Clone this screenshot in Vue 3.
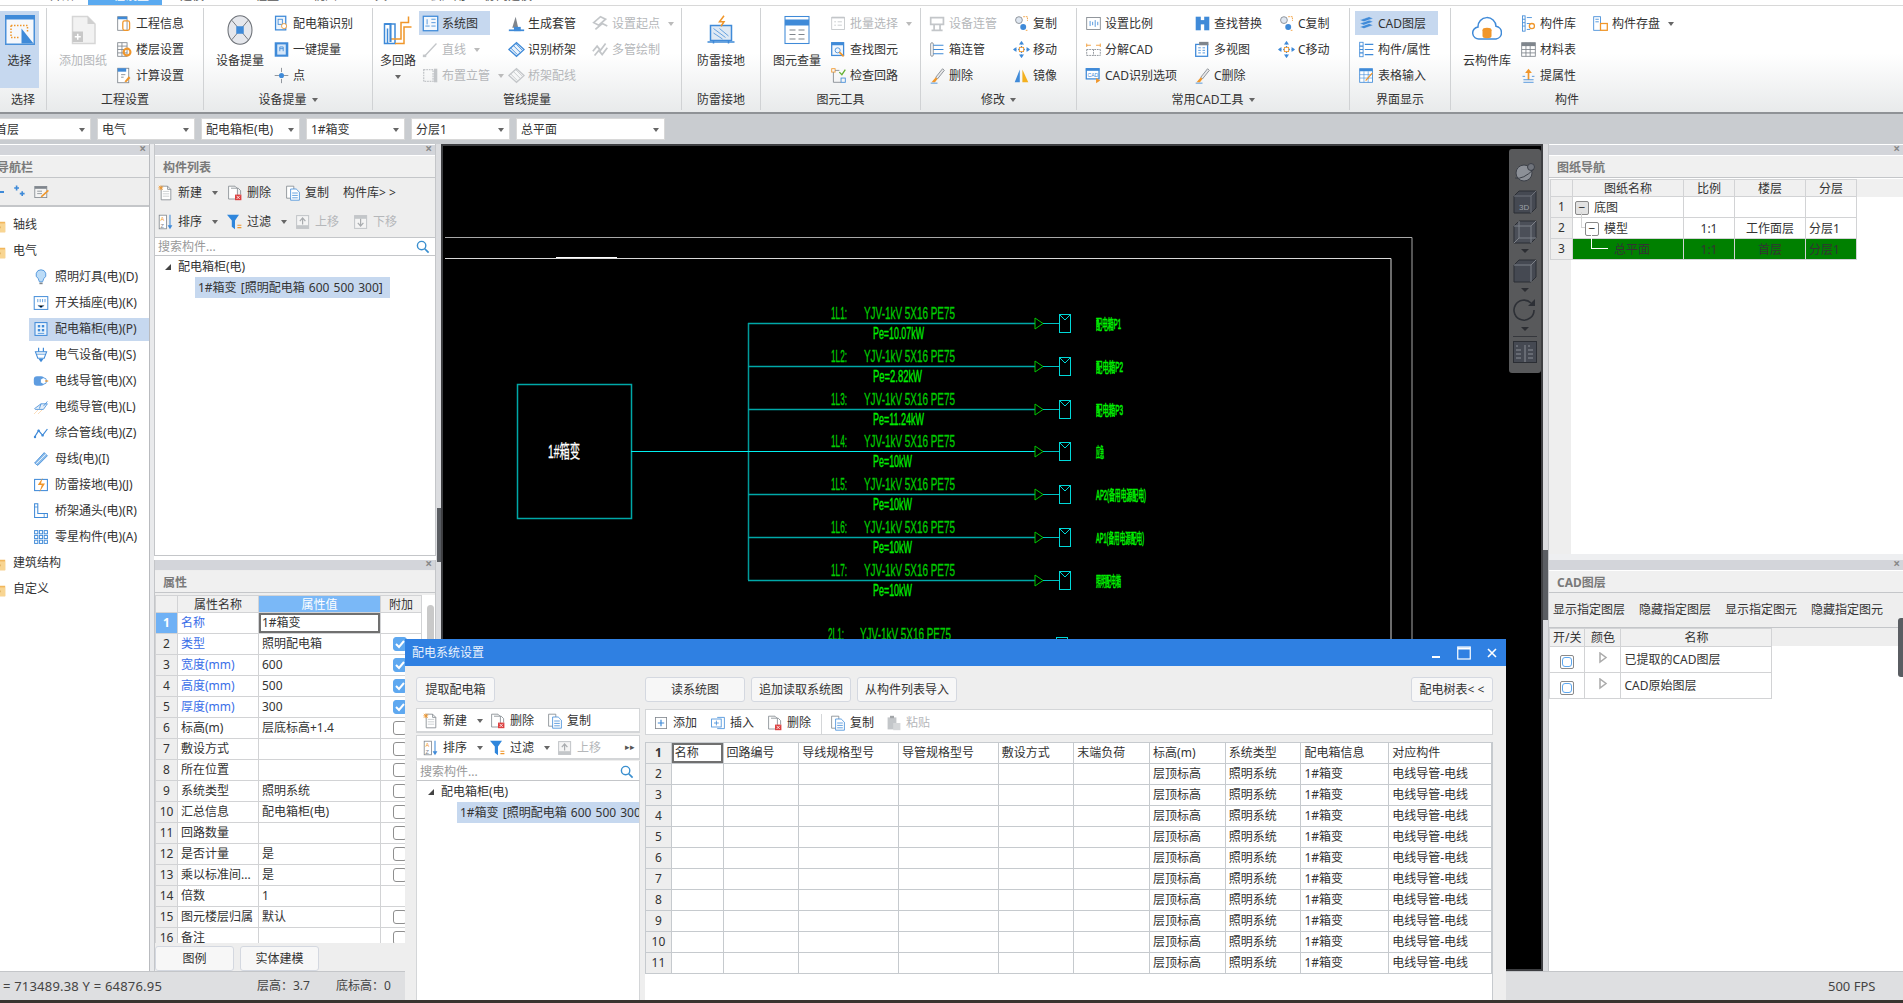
<template>
  <div class="app">
    <!-- 顶部页签，只露出一点 -->
    <div class="tabs">
      <span v-for="t in tabs" :key="t.t" class="tab" :class="{ on: t.on }" :style="{ width: t.w + 'px', paddingLeft: (t.pl || 0) + 'px', paddingRight: (t.pr || 0) + 'px' }">{{ t.t }}</span>
    </div>

    <!-- 功能区 -->
    <div class="ribbon">
      <div v-for="g in ribbon" :key="g.label" class="rgroup" :style="{ width: g.w + 'px' }">
        <div class="rbody">
          <div v-for="(p, i) in g.parts" :key="i" class="rpart" :style="{ width: p.w + 'px', paddingLeft: (p.pl || 0) + 'px' }">
            <div v-if="p.large" class="rlarge" :class="{ on: p.large.on, dis: p.large.dis }">
              <svg class="ic30" viewBox="0 0 20 20" v-html="icons[p.large.icon]"></svg>
              <span>{{ p.large.t }}</span>
              <i v-if="p.large.arrow" class="caret"></i>
            </div>
            <template v-else>
              <div v-for="it in p.items" :key="it.t" class="ritem" :class="{ on: it.on, dis: it.dis }">
                <svg class="ic18" viewBox="0 0 20 20" v-html="icons[it.icon]"></svg>
                <span>{{ it.t }}</span>
                <i v-if="it.arrow" class="caret side"></i>
              </div>
            </template>
          </div>
        </div>
        <div class="rlabel">{{ g.label }}<i v-if="g.arrow" class="caret side"></i></div>
      </div>
    </div>

    <!-- 下拉条 -->
    <div class="combos">
      <div v-for="c in combos" :key="c.t" class="combo" :style="{ width: c.w + 'px' }">
        <span>{{ c.t }}</span><i class="caret"></i>
      </div>
    </div>

    <div class="main">
      <!-- 导航栏 -->
      <div class="nav">
        <div class="grip"><b>×</b></div>
        <div class="title nav-title">导航栏</div>
        <div class="nav-tools">
          <i class="dash"></i>
          <svg class="ic16" viewBox="0 0 20 20" v-html="icons.plusplus"></svg>
          <svg class="ic16" viewBox="0 0 20 20" v-html="icons.editdoc"></svg>
        </div>
        <div class="nav-tree">
          <template v-for="n in navTree" :key="n.t">
            <div v-if="n.top" class="nav-top"><svg class="folder" viewBox="0 0 20 20" v-html="icons.folder"></svg>{{ n.t }}</div>
            <div v-else class="nav-sub" :class="{ on: n.on }"><svg class="ic16" viewBox="0 0 20 20" v-html="icons[n.icon]"></svg>{{ n.t }}</div>
          </template>
        </div>
      </div>

      <!-- 构件列表 + 属性 -->
      <div class="mid">
        <div class="list">
          <div class="grip"><b>×</b></div>
          <div class="title">构件列表</div>
          <div class="toolrow" v-for="(row, i) in listTools" :key="i">
            <div v-for="it in row" :key="it.t" class="titem" :class="{ dis: it.dis }" :style="{ width: it.w + 'px' }">
              <svg v-if="it.icon" class="ic16" viewBox="0 0 20 20" v-html="icons[it.icon]"></svg>
              <span>{{ it.t }}</span>
              <i v-if="it.arrow" class="caret side2"></i>
            </div>
          </div>
          <div class="search">
            <span>搜索构件...</span>
            <svg class="ic14" viewBox="0 0 20 20" v-html="icons.search"></svg>
          </div>
          <div class="ctree">
            <div class="ctree-root"><i class="tri"></i>配电箱柜(电)</div>
            <div class="ctree-leaf">1#箱变 [照明配电箱 600 500 300]</div>
          </div>
        </div>

        <div class="props">
          <div class="grip"><b>×</b></div>
          <div class="title">属性</div>
          <div class="props-wrap">
            <table class="grid ptable">
              <colgroup><col style="width:22px" /><col style="width:81px" /><col style="width:122px" /><col style="width:41px" /></colgroup>
              <tr class="head">
                <th></th><th>属性名称</th><th class="hot">属性值</th><th>附加</th>
              </tr>
              <tr v-for="(r, i) in props" :key="i">
                <td class="gut" :class="{ hotgut: i === 0 }">{{ i + 1 }}</td>
                <td :class="{ blue: i < 5 }">{{ r[0] }}</td>
                <td :class="{ sel: i === 0 }">{{ r[1] }}</td>
                <td class="chk">
                  <span v-if="r[2] !== null" class="box" :class="{ ck: r[2] }">
                    <svg v-if="r[2]" viewBox="0 0 14 14"><path d="M3 7l3 3 5-6" fill="none" stroke="#fff" stroke-width="2" /></svg>
                  </span>
                </td>
              </tr>
            </table>
            <div class="pscroll"><div></div></div>
          </div>
          <div class="pbtns">
            <div class="btn pbtn">图例</div>
            <div class="btn pbtn">实体建模</div>
          </div>
        </div>
      </div>

      <div class="sash left-sash"><i></i></div>

      <!-- CAD 画布 -->
      <div class="canvas">
        <svg class="cad" viewBox="441 144 1102 827" width="1102" height="827">
          <path d="M445 237.500H1412V640" fill="none" stroke="#a8a8a8" />
          <path d="M445 258.500H1391V640" fill="none" stroke="#d8d8d8" />
          <path d="M556 257.500H617" stroke="#fff" />
          <rect x="517.500" y="384.500" width="114" height="134" fill="none" stroke="#00a8a8" stroke-width="1.500" />
          <text x="548" y="458" fill="#fff" stroke="#fff" stroke-width=".3" class="cadt" font-size="18" textLength="32" lengthAdjust="spacingAndGlyphs">1#箱变</text>
          <path d="M748.500 323V580" stroke="#009a9a" stroke-width="1.500" />
          <path d="M631 451.500H1035" stroke="#00f0f0" />
          <g v-for="b in branches" :key="b.id">
            <path v-if="b.y !== 451" :d="`M748 ${b.y + .5}H1035`" stroke="#00a8a8" stroke-width="1.500" />
            <path :d="`M1035 ${b.y - 5}v11l8 -5.500z`" fill="none" stroke="#00c800" />
            <path :d="`M1043 ${b.y + .5}H1059`" stroke="#00c0c0" />
            <rect x="1059.500" :y="b.y - 8.500" width="11" height="18" fill="none" stroke="#00d8d8" />
            <path :d="`M1060 ${b.y - 8}l5 5 5 -5`" fill="none" stroke="#00d8d8" />
            <text x="831" :y="b.y - 4" class="cadt dark" font-size="16" textLength="16" lengthAdjust="spacingAndGlyphs">{{ b.id }}</text>
            <text x="864" :y="b.y - 4" class="cadt dark" font-size="16" textLength="91" lengthAdjust="spacingAndGlyphs">YJV-1kV 5X16 PE75</text>
            <text x="873" :y="b.y + 16" class="cadt bright" font-size="16" :textLength="b.pw" lengthAdjust="spacingAndGlyphs">{{ b.pe }}</text>
            <text x="1096" :y="b.y + 6" class="cadt heavy" font-size="14" :textLength="b.tw" lengthAdjust="spacingAndGlyphs">{{ b.tag }}</text>
          </g>
          <text x="828" y="640" class="cadt dark" font-size="16" textLength="16" lengthAdjust="spacingAndGlyphs">2L1:</text>
          <text x="860" y="640" class="cadt dark" font-size="16" textLength="91" lengthAdjust="spacingAndGlyphs">YJV-1kV 5X16 PE75</text>
          <rect x="1056.500" y="637.500" width="11" height="18" fill="none" stroke="#00d8d8" />
        </svg>

        <!-- 视图工具条 -->
        <div class="viewbar">
          <svg viewBox="0 0 24 24" width="24" height="24" class="vb1">
            <circle cx="11" cy="13" r="8" fill="#8c9097" stroke="#3c4048" />
            <circle cx="18" cy="7" r="3.500" fill="#70747c" stroke="#3c4048" />
            <path d="M2 18q8 2 19 -9" fill="none" stroke="#3c4048" />
          </svg>
          <svg viewBox="0 0 24 24" width="24" height="24" class="vb2">
            <path d="M1 6l5 -5h17v17l-5 5H1z" fill="#454952" stroke="#2b2e34" />
            <path d="M1 6h17v17M18 6l5 -5" fill="none" stroke="#6e727a" />
            <text x="6" y="20" fill="#9da1a8" font-size="8" font-family="Liberation Sans, sans-serif">3D</text>
          </svg>
          <svg viewBox="0 0 24 24" width="24" height="24" class="vb2">
            <path d="M1 6l5 -5h17v17l-5 5H1z" fill="#4b4f58" stroke="#2b2e34" />
            <path d="M6 1v17h17M6 18l-5 5M1 6h17v17M18 6l5 -5" fill="none" stroke="#7d8188" />
          </svg>
          <i class="vcaret"></i>
          <svg viewBox="0 0 24 24" width="24" height="24" class="vb2">
            <path d="M1 6l5 -5h17v17l-5 5H1z" fill="#454952" stroke="#2b2e34" />
            <path d="M1 6h17v17M18 6l5 -5" fill="none" stroke="#7d8188" />
          </svg>
          <i class="vcaret"></i>
          <svg viewBox="0 0 24 24" width="24" height="24" class="vb2">
            <path d="M21 12a10 10 0 1 1 -3 -7" fill="none" stroke="#2d3036" stroke-width="1.600" />
            <path d="M22 1v7h-7z" fill="#2d3036" />
          </svg>
          <i class="vcaret"></i>
          <div class="vline"></div>
          <svg viewBox="0 0 24 24" width="24" height="24" class="vb2">
            <rect x=".5" y="1.500" width="23" height="21" fill="#454952" stroke="#2b2e34" />
            <path d="M12 5v17M3 6h2M3 10h5M3 14h5M3 18h5M15 6h2M15 10h5M15 14h5M15 18h5" stroke="#8a8e95" />
          </svg>
        </div>
      </div>

      <div class="sash right-sash"><i></i></div>

      <!-- 右侧面板 -->
      <div class="right">
        <div class="rt-top">
          <div class="grip"><b>×</b></div>
          <div class="title">图纸导航</div>
          <div class="dwg-wrap">
            <table class="grid dwg">
              <colgroup><col style="width:22px" /><col style="width:111px" /><col style="width:51px" /><col style="width:71px" /><col style="width:51px" /></colgroup>
              <tr class="head"><th></th><th>图纸名称</th><th>比例</th><th>楼层</th><th>分层</th></tr>
              <tr>
                <td class="gut">1</td>
                <td class="tree-cell"><span class="minus gray">−</span><span class="n1">底图</span></td>
                <td></td><td></td><td></td>
              </tr>
              <tr>
                <td class="gut">2</td>
                <td class="tree-cell"><i class="tl l1"></i><span class="minus m2">−</span><span class="n2">模型</span></td>
                <td class="c">1:1</td><td class="c">工作面层</td><td>分层1</td>
              </tr>
              <tr class="green">
                <td class="gut">3</td>
                <td class="tree-cell"><i class="tl l2"></i><span class="n3">总平面</span></td>
                <td class="c">1:1</td><td class="c">首层</td><td>分层1</td>
              </tr>
            </table>
          </div>
        </div>
        <div class="rt-gap"></div>
        <div class="rt-bottom">
          <div class="grip"><b>×</b></div>
          <div class="title">CAD图层</div>
          <div class="layer-tools">
            <span>显示指定图层</span><span>隐藏指定图层</span><span>显示指定图元</span><span>隐藏指定图元</span>
          </div>
          <div class="layer-wrap">
            <table class="grid layer">
              <colgroup><col style="width:35px" /><col style="width:36px" /><col style="width:151px" /></colgroup>
              <tr class="head"><th>开/关</th><th>颜色</th><th>名称</th></tr>
              <tr v-for="l in layers" :key="l">
                <td class="c"><span class="lbox"><i></i></span></td>
                <td class="c"><svg class="ltri" viewBox="0 0 10 12"><path d="M2 1v9l6 -4.500z" fill="#fff" stroke="#aaa" stroke-width="1.500" /></svg></td>
                <td>{{ l }}</td>
              </tr>
            </table>
          </div>
        </div>
        <div class="edge-tab"></div>
      </div>
    </div>

    <div class="status">
      <span class="s-xy">= 713489.38 Y = 64876.95</span>
      <span class="s-h">层高：3.7</span>
      <span class="s-b">底标高：0</span>
      <span class="s-fps">500 FPS</span>
    </div>
    <div class="taskline"></div>

    <!-- 配电系统设置 弹窗 -->
    <div class="modal">
      <div class="m-title">
        <span>配电系统设置</span>
        <div class="m-ctrls">
          <svg width="14" height="14" viewBox="0 0 14 14"><path d="M3 11h8" stroke="#fff" stroke-width="2" /></svg>
          <svg width="14" height="14" viewBox="0 0 14 14"><rect x=".75" y="1" width="12.500" height="12" fill="none" stroke="#fff" stroke-width="1.200" /><path d="M1 2.500h12" stroke="#fff" stroke-width="2" /></svg>
          <svg width="14" height="14" viewBox="0 0 14 14"><path d="M3 3l8 8M11 3l-8 8" stroke="#fff" stroke-width="1.600" /></svg>
        </div>
      </div>
      <div class="m-body">
        <div class="m-left">
          <div class="btn m-get">提取配电箱</div>
          <div class="m-bar" v-for="(row, i) in modalTools" :key="i">
            <div v-for="it in row" :key="it.t" class="titem" :class="{ dis: it.dis }" :style="{ width: it.w + 'px' }">
              <svg class="ic16" viewBox="0 0 20 20" v-html="icons[it.icon]"></svg>
              <span>{{ it.t }}</span>
              <i v-if="it.arrow" class="caret side2"></i>
            </div>
            <span v-if="i === 1" class="m-more">▸▸</span>
          </div>
          <div class="search m-search">
            <span>搜索构件...</span>
            <svg class="ic14" viewBox="0 0 20 20" v-html="icons.search"></svg>
          </div>
          <div class="m-tree">
            <div class="m-root"><i class="tri"></i>配电箱柜(电)</div>
            <div class="m-leaf"><span>1#箱变 [照明配电箱 600 500 300]</span></div>
          </div>
        </div>

        <div class="m-right">
          <div class="m-btnrow">
            <div class="btn mb1">读系统图</div>
            <div class="btn mb1">追加读取系统图</div>
            <div class="btn mb1">从构件列表导入</div>
            <div class="btn mb2">配电树表&lt; &lt;</div>
          </div>
          <div class="m-rbar">
            <div v-for="it in gridTools" :key="it.t" class="titem" :class="{ dis: it.dis, sepd: it.sep }" :style="{ width: it.w + 'px' }">
              <svg class="ic16" viewBox="0 0 20 20" v-html="icons[it.icon]"></svg>
              <span>{{ it.t }}</span>
            </div>
          </div>
          <div class="m-grid">
            <table class="grid circuit">
              <colgroup><col v-for="(w, i) in circuitCols" :key="i" :style="{ width: w + 'px' }" /></colgroup>
              <tr v-for="r in 11" :key="r">
                <td class="gut cg" :class="{ hotgut2: r === 1 }">{{ r }}</td>
                <template v-if="r === 1">
                  <td v-for="(h, i) in circuitHead" :key="h" :class="{ sel: i === 0 }">{{ h }}</td>
                </template>
                <template v-else>
                  <td v-for="n in 6" :key="n"></td>
                  <td>层顶标高</td><td>照明系统</td><td>1#箱变</td><td>电线导管-电线</td>
                </template>
              </tr>
            </table>
          </div>
        </div>
      </div>
    </div>
  </div>
</template>

<script setup>
const B = '#3f8ad8'
const O = '#f0962a'
const G = '#7f858c'
const L = '#c3c6c9'

// 图标都画在 20x20 的格子里
const doc = (c = G) => `<path d="M4 1.500h8l4 4v13H4z" fill="#fff" stroke="${c}"/><path d="M12 1.500v4h4" fill="none" stroke="${c}"/>`
const icons = {
  select: `<rect x=".5" y=".5" width="19" height="19" fill="#f6f8fc" stroke="#4a90d9"/><rect x="0" y="0" width="20" height="3" fill="#3f8ad8"/><path d="M4 7h11v4M4 7v8h5" fill="none" stroke="${O}" stroke-dasharray="1 1"/><path d="M11 9v10h8z" fill="#3f8ad8"/>`,
  adddwg: `<path d="M3 1h10l5 5v13H3z" fill="#f2f2f2" stroke="#d6d6d6"/><path d="M13 1v5h5z" fill="#d0d0d0"/><rect x="3" y="11" width="7" height="7" fill="#c8c8c8"/><path d="M6.500 12.500v4M4.500 14.500h4" stroke="#fff"/>`,
  info: `<rect x="2" y="2" width="11" height="16" fill="#fff" stroke="${G}"/><rect x="2" y="2" width="11" height="3" fill="${B}"/><rect x="8" y="7" width="8" height="11" rx="2" fill="none" stroke="${O}" stroke-width="1.500"/>`,
  floor: `<rect x="2" y="2" width="11" height="16" fill="#fff" stroke="${G}"/><path d="M2 6h11M2 10h11M2 14h11M7 2v16" stroke="${G}"/><circle cx="13" cy="13" r="4" fill="none" stroke="${O}" stroke-width="2.500"/>`,
  calc: `<rect x="2" y="1.500" width="13" height="17" fill="#fff" stroke="${G}"/><rect x="2" y="1.500" width="10" height="4" fill="${B}"/><path d="M6 9h5M6 12h3" stroke="${G}"/><path d="M10 17l5 -6 2 2 -5 5z" fill="${O}"/>`,
  device: `<ellipse cx="10" cy="10" rx="8" ry="9.500" fill="#e5e7ec" stroke="#6d7177" stroke-width=".7"/><path d="M4.500 3.500l11 13M15.500 3.500l-11 13" stroke="#6d7177" stroke-width=".6"/><rect x="7.500" y="7.500" width="5" height="5" fill="${B}"/>`,
  box: `<rect x="3" y="1.500" width="12" height="16" fill="#eef5fc" stroke="${B}" stroke-width="1.500"/><rect x="6" y="5" width="5" height="6" fill="none" stroke="${B}"/><circle cx="13" cy="13" r="3" fill="#fff" stroke="${O}"/>`,
  onekey: `<rect x="2" y="1.500" width="16" height="17" fill="${B}"/><rect x="5" y="4" width="10" height="12" fill="#d6e7f9"/><path d="M8 12V7h4v5M8 9h4" stroke="${B}" fill="none"/>`,
  point: `<path d="M10 1v5M10 14v5M2 10h5M13 10h5" stroke="${G}"/><circle cx="10" cy="10" r="3" fill="${B}"/>`,
  multi: `<path d="M1 6h7v13H1zM3 19v-10" fill="none" stroke="${B}" stroke-width="1"/><path d="M5 16h7V5h5V1M8 19h6V8h5" fill="none" stroke="${O}" stroke-width="1"/><path d="M1 6h4v12" fill="none" stroke="${B}" stroke-width="1.400"/>`,
  sys: `<rect x="1.500" y="1.500" width="17" height="17" fill="#f4f8fd" stroke="${B}" stroke-width="1.500"/><path d="M11 5h5M11 9h5M4 13h5M11 13h5M6 5v6" stroke="${B}"/>`,
  line: `<path d="M3 18L17 3" stroke="${L}" stroke-width="1.500"/><rect x="1" y="16" width="4" height="3" fill="${L}"/>`,
  riser: `<path d="M2 3h11v14H2z" fill="none" stroke="${L}" stroke-dasharray="2 1" stroke-width="1.500"/><rect x="14" y="2" width="4" height="16" fill="${L}"/>`,
  sleeve: `<path d="M9 2l-4 13h7z" fill="#7f858c"/><path d="M1 18h18" stroke="#3f8ad8" stroke-width="2"/><rect x="7" y="14" width="8" height="5" fill="#3f8ad8"/>`,
  bridge: `<path d="M1 10l9 -8 9 8 -9 8z" fill="#eaf2fb" stroke="${B}" stroke-width="1.500"/><path d="M6 5l9 9M9 3l8 8M3 8l8 8" stroke="${B}"/>`,
  bridgew: `<path d="M1 10l9 -8 9 8 -9 8z" fill="none" stroke="${L}" stroke-width="1.500"/><path d="M6 5l9 9M9 3l8 8M3 8l8 8" stroke="${L}"/>`,
  start: `<path d="M2 9l8 -7 6 3 -8 7zM4 17l8 -7 6 3" fill="none" stroke="${L}" stroke-width="2"/>`,
  mpipe: `<path d="M1 12l5 -6 4 5 6 -8M3 17l5 -6 4 5 6 -8" fill="none" stroke="${L}" stroke-width="2"/>`,
  thunder: `<rect x="3" y="7" width="14" height="10" fill="#dfe9f4" stroke="${B}"/><path d="M5 9l8 6M9 9l6 5M5 12l6 4" stroke="${B}" stroke-width=".5"/><path d="M1 18h18M5 17v2M15 17v2" stroke="${B}"/><path d="M12 .5l-3 4h3l-2 3" fill="none" stroke="${O}"/>`,
  query: `<rect x="2" y="1" width="16" height="18" fill="#fff" stroke="${B}" stroke-width=".7"/><rect x="2" y="3" width="16" height="4" fill="${B}"/><path d="M5 10h4M11 10h4M5 13h4M11 13h4M5 16h4M11 16h4" stroke="${G}" stroke-width=".7"/>`,
  batch: `<rect x="2" y="3" width="15" height="14" fill="none" stroke="${L}"/><path d="M2 3h15" stroke="${L}" stroke-width="2"/><path d="M5 8h2M5 12h2M9 8h5M9 12h5" stroke="${L}"/>`,
  find: `<rect x="2" y="2" width="14" height="15" fill="#f2f7fd" stroke="${B}" stroke-width="1.500"/><path d="M2 2h14v3H2z" fill="${B}"/><circle cx="9" cy="11" r="3" fill="none" stroke="${B}"/><path d="M11 13l5 5" stroke="${O}" stroke-width="2"/>`,
  check: `<rect x="2" y="2" width="4" height="4" fill="none" stroke="${O}"/><rect x="13" y="13" width="5" height="5" fill="none" stroke="${B}"/><path d="M4 6v12h9M6 4h5" fill="none" stroke="${G}"/><path d="M11 6l3 3 4 -6" fill="none" stroke="#62b030" stroke-width="1.500"/>`,
  devc: `<path d="M2 3h15v8H2zM6 11v7M13 11v7M3 18h13" fill="none" stroke="${L}" stroke-width="2"/>`,
  boxc: `<rect x="2" y="2" width="3" height="16" rx="1.500" fill="#fff" stroke="${G}"/><path d="M5 5h12M5 10h12M5 15h12" stroke="${B}" stroke-width="1.400"/>`,
  brush: `<path d="M8 12L16 2l2 2-8 10z" fill="#e8e8e8" stroke="${G}"/><path d="M8 12l2 2-3 4H3z" fill="${O}"/><path d="M2 19h8" stroke="${B}"/>`,
  copy: `<circle cx="7" cy="6" r="4" fill="#dfe7f1" stroke="${G}"/><circle cx="12" cy="14" r="3.500" fill="${B}"/><path d="M12 2h5v5M17 18h-3" fill="none" stroke="${O}" stroke-dasharray="2 1"/>`,
  move: `<path d="M10 1v18M1 10h18" stroke="${B}" stroke-dasharray="3 2" stroke-width="1.500"/><path d="M10 0l3 4H7zM10 20l3 -4H7zM0 10l4 -3v6zM20 10l-4 -3v6z" fill="${B}"/><rect x="7.500" y="7.500" width="5" height="5" fill="#fff" stroke="${O}"/>`,
  mirror: `<path d="M8 3v15H2z" fill="${B}"/><path d="M11 3v15h7z" fill="#f3b01f"/>`,
  ratio: `<rect x="2" y="3" width="16" height="14" fill="#fff" stroke="${G}"/><path d="M6 7v6M9 8v4M12 6v8M15 8v4" stroke="${B}"/>`,
  explode: `<path d="M2 5h5M13 5h5M2 3v4M18 3v4" stroke="${O}"/><path d="M2 10h16M2 10v7M18 10v7M2 17h16M10 10v7" fill="none" stroke="${G}" stroke-dasharray="2 1"/>`,
  cadopt: `<rect x="1.500" y="2" width="15" height="12" fill="#fff" stroke="${B}" stroke-width="1.500"/><rect x="1" y="1.500" width="16" height="3" fill="${B}"/><text x="3" y="12" font-size="6" fill="${B}" font-family="Liberation Sans, sans-serif">CAD</text><path d="M13 13l5 3-5 3z" fill="${O}"/>`,
  findr: `<rect x="2" y="2" width="6" height="16" fill="${B}"/><rect x="12" y="2" width="6" height="16" fill="${B}"/><rect x="6" y="6" width="8" height="5" fill="${B}"/>`,
  mview: `<rect x="2" y="4" width="14" height="14" fill="#fff" stroke="${B}" stroke-width="1.500"/><rect x="6" y="1" width="11" height="4" fill="${G}"/><path d="M5 8h3M10 8h3M5 11h3M10 11h3M5 14h3M10 14h3" stroke="${B}"/>`,
  layer: `<path d="M2 6l11 -4 5 2-11 4zM2 10l11 -4 5 2-11 4zM2 14l11 -4 5 2-11 4z" fill="${B}" stroke="#dbe8f6" stroke-width=".5"/>`,
  comp: `<rect x="2" y="1.500" width="4" height="17" fill="#fff" stroke="${B}"/><path d="M2 6h4M2 10h4M2 14h4M8 4h10M8 10h10M8 16h10" stroke="${B}" stroke-width="1.300"/>`,
  tinput: `<rect x="2" y="2" width="15" height="16" fill="#fff" stroke="${B}"/><rect x="2" y="2" width="15" height="3" fill="${B}"/><path d="M2 9h15M2 13h15M7 5v13M12 5v13" stroke="${B}" stroke-width=".7"/><path d="M9 16l8 -9" stroke="${O}" stroke-width="1.500"/>`,
  cloud: `<path d="M5 16a4 4 0 0 1 -1 -8 6 6 0 0 1 12 -.500 4.300 4.300 0 0 1 0 8.500z" fill="#fff" stroke="${B}" stroke-width="1"/><ellipse cx="10" cy="10" rx="3" ry="1.500" fill="${O}"/><path d="M7 10v4a3 1.500 0 0 0 6 0v-4" fill="${O}"/>`,
  lib: `<rect x="3" y="1" width="3" height="18" fill="#fff" stroke="${B}"/><path d="M3 5h3M3 9h3M3 13h3M8 3h6M8 10h4M8 17h4" stroke="${B}"/><circle cx="14" cy="13" r="3" fill="none" stroke="${O}" stroke-width="1.500"/>`,
  mat: `<rect x="2" y="2" width="16" height="16" fill="#fff" stroke="${G}"/><rect x="2" y="2" width="16" height="4" fill="${G}"/><path d="M2 10h16M2 14h16M7 2v16M12 2v16" stroke="${G}"/>`,
  attr: `<path d="M10 2l-4 5h8z" fill="${O}"/><path d="M10 7v8" stroke="${O}" stroke-width="2"/><path d="M4 18h12M6 11H3M17 11h-3M4 15h12" stroke="${B}"/>`,
  save: `<rect x="2" y="2" width="8" height="16" fill="#fff" stroke="${B}"/><path d="M4 5h4M4 8h4" stroke="${B}"/><rect x="10" y="10" width="8" height="8" fill="#fff" stroke="${O}" stroke-width="1.500"/>`,
  plusplus: `<path d="M4 5h6M7 2v6M11 12h6M14 9v6" stroke="${B}" stroke-width="2"/>`,
  editdoc: `<rect x="1" y="3" width="15" height="14" fill="#f4f4f4" stroke="${G}"/><path d="M1 3h15v3H1z" fill="${G}"/><path d="M4 9h6M4 12h6" stroke="${G}"/><path d="M9 16l9 -8" stroke="${O}" stroke-width="2"/>`,
  folder: `<path d="M1 4h7l2 2h9v13H1z" fill="#f1b75c"/><rect x="1" y="8" width="18" height="11" fill="#f8d592"/><path d="M4 13h9" stroke="#c88b2e" stroke-width="2"/>`,
  bulb: `<path d="M10 1a6 6 0 0 1 3.500 11l-1.500 4H8l-1.500 -4A6 6 0 0 1 10 1z" fill="#bcdcf7" stroke="${B}"/><path d="M8 18h4" stroke="${G}" stroke-width="2"/>`,
  socket: `<rect x="1.500" y="2" width="17" height="16" fill="#fff" stroke="${B}" stroke-width="1.200"/><path d="M6 5v4M9 5v4M12 5v4M15 5v4M6 13l4 3 4 -3" stroke="${B}"/>`,
  panel: `<rect x="2.500" y="2" width="15" height="16" fill="#eaf3fc" stroke="${B}" stroke-width="1.300"/><rect x="6" y="5" width="3" height="3" fill="${B}"/><rect x="11" y="5" width="3" height="3" fill="${B}"/><rect x="6" y="10" width="3" height="3" fill="${B}"/><rect x="11" y="10" width="3" height="3" fill="${B}"/><path d="M6 15.500h8" stroke="${B}"/>`,
  plug: `<path d="M7 1v5M13 1v5" stroke="${B}" stroke-width="1.500"/><path d="M3 6h14l-3 8h-8z" fill="#fff" stroke="${B}" stroke-width="1.300"/><path d="M5 9h10" stroke="${B}"/><path d="M7 15h6l-3 4z" fill="${B}"/>`,
  conduit: `<rect x="1" y="4" width="13" height="12" rx="4" fill="#5e9ce0"/><circle cx="13" cy="10" r="4" fill="#fff" stroke="${B}"/><path d="M15 10h4" stroke="${O}" stroke-width="1.500"/>`,
  cable: `<path d="M2 12l8 -6h8l-5 7H3z" fill="#e6eff9" stroke="${B}"/><path d="M10 6l-2 6M18 3l-5 6" stroke="${B}"/><path d="M2 18l4 -4M7 18l4 -4" stroke="${O}" stroke-dasharray="1 1"/>`,
  route: `<path d="M2 15l5 -8 5 6 6 -8" fill="none" stroke="${B}" stroke-width="1.500"/><circle cx="2.500" cy="15" r="1.500" fill="${B}"/><circle cx="7" cy="7" r="1.500" fill="${B}"/><circle cx="12" cy="13" r="1.500" fill="${B}"/>`,
  bus: `<path d="M2 15L14 2l4 4L6 18z" fill="#8dbdea" stroke="${B}"/><path d="M4 16L16 4" stroke="#fff"/>`,
  ground: `<rect x="2" y="3" width="16" height="14" fill="#fff" stroke="${B}" stroke-width="1.300"/><path d="M12 1l-6 9h5l-3 9 7 -11h-5z" fill="${O}"/>`,
  elbow: `<path d="M2 1h4v12h12v5H2z" fill="#fff" stroke="${B}" stroke-width="1.300"/><path d="M2 5h4M14 13v5" stroke="${B}"/>`,
  parts: `<g fill="none" stroke="${B}" stroke-width="1.200"><rect x="2" y="2" width="4" height="4"/><rect x="8" y="2" width="4" height="4"/><rect x="14" y="2" width="4" height="4"/><rect x="2" y="8" width="4" height="4"/><rect x="8" y="8" width="4" height="4"/><rect x="14" y="8" width="4" height="4"/><rect x="2" y="14" width="4" height="4"/><rect x="8" y="14" width="4" height="4"/><rect x="14" y="14" width="4" height="4"/></g>`,
  newd: `${doc()}<path d="M6 8h8M6 11h8M6 14h8" stroke="${L}"/><path d="M1 1l5 5M6 1L1 6M3.500 .5v6M.5 3.500h6" stroke="${O}"/>`,
  del: `<path d="M2 1.500h8l3 3v13H2z" fill="#fff" stroke="${G}"/><path d="M5 4h9l3 3v5" fill="none" stroke="${G}"/><rect x="10" y="12" width="8" height="7" fill="#dd4040"/><path d="M12 13.500l4 4M16 13.500l-4 4" stroke="#fff"/>`,
  cpy: `<path d="M2 1.500h9v15H2z" fill="#fff" stroke="${G}"/><path d="M7 5h7l4 4v10H7z" fill="#fff" stroke="${B}"/><path d="M9 10h7M9 13h7M9 16h7" stroke="${B}"/>`,
  sort: `<rect x="1.500" y="1.500" width="9" height="17" fill="#fff" stroke="${G}"/><text x="3" y="9" font-size="7" fill="${O}" font-family="Liberation Sans, sans-serif">A</text><text x="3" y="17" font-size="7" fill="${G}" font-family="Liberation Sans, sans-serif">Z</text><path d="M15 1v15" stroke="${B}" stroke-width="1.300"/><path d="M12 14l3 5 3 -5z" fill="${B}"/>`,
  filter: `<path d="M0 1h15l-5 7v11l-4 -3V8z" fill="#2f86dc"/><path d="M13 14h5M13 17h5" stroke="${O}" stroke-width="1.400"/>`,
  up: `<rect x="2" y="2" width="15" height="16" fill="#f4f4f4" stroke="${L}" stroke-width="1.300"/><rect x="2" y="14" width="15" height="4" fill="${L}"/><path d="M9.500 13V6M6 9l3.500 -4 3.500 4" fill="none" stroke="#a9acaf" stroke-width="1.500"/>`,
  down: `<rect x="2" y="2" width="15" height="16" fill="#f4f4f4" stroke="${L}" stroke-width="1.300"/><rect x="2" y="2" width="15" height="4" fill="${L}"/><path d="M9.500 6v8M6 11l3.500 4 3.500 -4" fill="none" stroke="#a9acaf" stroke-width="1.500"/>`,
  add: `<rect x="3" y="3" width="14" height="14" fill="#fff" stroke="${G}"/><path d="M10 6v8M6 10h8" stroke="${B}" stroke-width="1.500"/>`,
  ins: `<rect x="2" y="5" width="12" height="10" fill="#fff" stroke="${B}"/><path d="M9 3h9v14H9" fill="none" stroke="${B}"/><path d="M5 10h6M8 7v6" stroke="${B}"/>`,
  paste: `<rect x="2" y="3" width="11" height="15" fill="${L}"/><rect x="5" y="1" width="5" height="3" fill="#a3a6a9"/><rect x="9" y="10" width="9" height="9" fill="#d5d7d9"/>`,
  search: `<circle cx="8" cy="8" r="6" fill="none" stroke="#3a8fcf" stroke-width="2"/><path d="M12.500 12.500L18 18" stroke="#3a8fcf" stroke-width="2.500"/>`
}

const tabs = [
  { t: '开始', w: 88, pl: 36 }, { t: '工程设置', w: 74, on: true }, { t: '建模', w: 60 }, { t: '工程量', w: 78 },
  { t: '视图', w: 50 }, { t: '工具', w: 62, pr: 12 }, { t: '云应用', w: 72 }, { t: '协同建模', w: 48 }
]

const ribbon = [
  { label: '选择', w: 47, parts: [{ w: 39, large: { t: '选择', icon: 'select', on: true } }] },
  { label: '工程设置', w: 157, parts: [
    { w: 66, pl: 6, large: { t: '添加图纸', icon: 'adddwg', dis: true } },
    { w: 90, items: [{ t: '工程信息', icon: 'info' }, { t: '楼层设置', icon: 'floor' }, { t: '计算设置', icon: 'calc' }] }
  ] },
  { label: '设备提量', w: 169, arrow: true, parts: [
    { w: 66, pl: 6, large: { t: '设备提量', icon: 'device' } },
    { w: 99, items: [{ t: '配电箱识别', icon: 'box' }, { t: '一键提量', icon: 'onekey' }, { t: '点', icon: 'point' }] }
  ] },
  { label: '管线提量', w: 309, parts: [
    { w: 46, pl: 4, large: { t: '多回路', icon: 'multi', arrow: true } },
    { w: 86, items: [{ t: '系统图', icon: 'sys', on: true }, { t: '直线', icon: 'line', dis: true, arrow: true }, { t: '布置立管', icon: 'riser', dis: true, arrow: true }] },
    { w: 84, items: [{ t: '生成套管', icon: 'sleeve' }, { t: '识别桥架', icon: 'bridge' }, { t: '桥架配线', icon: 'bridgew', dis: true }] },
    { w: 90, items: [{ t: '设置起点', icon: 'start', dis: true, arrow: true }, { t: '多管绘制', icon: 'mpipe', dis: true }] }
  ] },
  { label: '防雷接地', w: 79, parts: [{ w: 78, large: { t: '防雷接地', icon: 'thunder' } }] },
  { label: '图元工具', w: 160, parts: [
    { w: 66, pl: 6, large: { t: '图元查量', icon: 'query' } },
    { w: 90, items: [{ t: '批量选择', icon: 'batch', dis: true, arrow: true }, { t: '查找图元', icon: 'find' }, { t: '检查回路', icon: 'check' }] }
  ] },
  { label: '修改', w: 156, arrow: true, parts: [
    { w: 89, pl: 5, items: [{ t: '设备连管', icon: 'devc', dis: true }, { t: '箱连管', icon: 'boxc' }, { t: '删除', icon: 'brush' }] },
    { w: 60, items: [{ t: '复制', icon: 'copy' }, { t: '移动', icon: 'move' }, { t: '镜像', icon: 'mirror' }] }
  ] },
  { label: '常用CAD工具', w: 273, arrow: true, parts: [
    { w: 114, pl: 5, items: [{ t: '设置比例', icon: 'ratio' }, { t: '分解CAD', icon: 'explode' }, { t: 'CAD识别选项', icon: 'cadopt' }] },
    { w: 84, items: [{ t: '查找替换', icon: 'findr' }, { t: '多视图', icon: 'mview' }, { t: 'C删除', icon: 'brush' }] },
    { w: 70, items: [{ t: 'C复制', icon: 'copy' }, { t: 'C移动', icon: 'move' }] }
  ] },
  { label: '界面显示', w: 101, parts: [
    { w: 95, pl: 5, items: [{ t: 'CAD图层', icon: 'layer', on: true }, { t: '构件/属性', icon: 'comp' }, { t: '表格输入', icon: 'tinput' }] }
  ] },
  { label: '构件', w: 232, parts: [
    { w: 66, pl: 6, large: { t: '云构件库', icon: 'cloud' } },
    { w: 72, items: [{ t: '构件库', icon: 'lib' }, { t: '材料表', icon: 'mat' }, { t: '提属性', icon: 'attr' }] },
    { w: 94, items: [{ t: '构件存盘', icon: 'save', arrow: true }] }
  ] }
]

const combos = [
  { t: '首层', w: 101 }, { t: '电气', w: 98 }, { t: '配电箱柜(电)', w: 99 },
  { t: '1#箱变', w: 99 }, { t: '分层1', w: 99 }, { t: '总平面', w: 149 }
]

const navTree = [
  { t: '轴线', top: true }, { t: '电气', top: true },
  { t: '照明灯具(电)(D)', icon: 'bulb' }, { t: '开关插座(电)(K)', icon: 'socket' },
  { t: '配电箱柜(电)(P)', icon: 'panel', on: true }, { t: '电气设备(电)(S)', icon: 'plug' },
  { t: '电线导管(电)(X)', icon: 'conduit' }, { t: '电缆导管(电)(L)', icon: 'cable' },
  { t: '综合管线(电)(Z)', icon: 'route' }, { t: '母线(电)(I)', icon: 'bus' },
  { t: '防雷接地(电)(J)', icon: 'ground' }, { t: '桥架通头(电)(R)', icon: 'elbow' },
  { t: '零星构件(电)(A)', icon: 'parts' }, { t: '建筑结构', top: true }, { t: '自定义', top: true }
]

const listTools = [
  [
    { t: '新建', icon: 'newd', arrow: true, w: 69 }, { t: '删除', icon: 'del', w: 58 },
    { t: '复制', icon: 'cpy', w: 58 }, { t: '构件库> >', w: 80 }
  ],
  [
    { t: '排序', icon: 'sort', arrow: true, w: 69 }, { t: '过滤', icon: 'filter', arrow: true, w: 68 },
    { t: '上移', icon: 'up', dis: true, w: 58 }, { t: '下移', icon: 'down', dis: true, w: 60 }
  ]
]

const modalTools = [
  [
    { t: '新建', icon: 'newd', arrow: true, w: 67 }, { t: '删除', icon: 'del', w: 57 },
    { t: '复制', icon: 'cpy', w: 60 }
  ],
  [
    { t: '排序', icon: 'sort', arrow: true, w: 67 }, { t: '过滤', icon: 'filter', arrow: true, w: 67 },
    { t: '上移', icon: 'up', dis: true, w: 60 }
  ]
]

const gridTools = [
  { t: '添加', icon: 'add', w: 57 }, { t: '插入', icon: 'ins', w: 57 }, { t: '删除', icon: 'del', w: 54 },
  { t: '复制', icon: 'cpy', w: 65, sep: true }, { t: '粘贴', icon: 'paste', dis: true, w: 60 }
]

const props = [
  ['名称', '1#箱变', null], ['类型', '照明配电箱', true], ['宽度(mm)', '600', true], ['高度(mm)', '500', true],
  ['厚度(mm)', '300', true], ['标高(m)', '层底标高+1.4', false], ['敷设方式', '', false], ['所在位置', '', false],
  ['系统类型', '照明系统', false], ['汇总信息', '配电箱柜(电)', false], ['回路数量', '', false], ['是否计量', '是', false],
  ['乘以标准间...', '是', false], ['倍数', '1', null], ['图元楼层归属', '默认', false], ['备注', '', false]
]

const branches = [
  { id: '1L1:', y: 323, pe: 'Pe=10.07kW', pw: 51, tag: '配电箱P1', tw: 25 },
  { id: '1L2:', y: 366, pe: 'Pe=2.82kW', pw: 49, tag: '配电箱P2', tw: 27 },
  { id: '1L3:', y: 409, pe: 'Pe=11.24kW', pw: 51, tag: '配电箱P3', tw: 27 },
  { id: '1L4:', y: 451, pe: 'Pe=10kW', pw: 39, tag: '应急', tw: 8 },
  { id: '1L5:', y: 494, pe: 'Pe=10kW', pw: 39, tag: 'AP2(备用电源配电)', tw: 50 },
  { id: '1L6:', y: 537, pe: 'Pe=10kW', pw: 39, tag: 'AP1(备用电源配电)', tw: 48 },
  { id: '1L7:', y: 580, pe: 'Pe=10kW', pw: 39, tag: '照明配电箱', tw: 25 }
]

const layers = ['已提取的CAD图层', 'CAD原始图层']

const circuitCols = [26, 52, 76, 100, 100, 76, 76, 76, 76, 88, 103]
const circuitHead = ['名称', '回路编号', '导线规格型号', '导管规格型号', '敷设方式', '末端负荷', '标高(m)', '系统类型', '配电箱信息', '对应构件']
</script>

<style>
html, body {
  margin: 0;
  overflow: hidden;
}
</style>

<style scoped>
.app {
  position: relative;
  width: 1903px;
  height: 1003px;
  overflow: hidden;
  display: flex;
  flex-direction: column;
  font-family: "Noto Sans", "Noto Sans CJK SC", sans-serif;
  font-size: 12px;
  line-height: 16px;
  color: #333;
  background: #e6e7e9;
}
svg { flex: none; display: block; }
i { display: block; font-style: normal; }

/* 页签 */
.tabs {
  height: 5px;
  flex: none;
  display: flex;
  background: #fff;
  overflow: hidden;
}
.tab {
  height: 17px;
  margin-top: -12px;
  box-sizing: border-box;
  flex: none;
  text-align: center;
  color: #555;
  white-space: nowrap;
}
.tab.on { background: #5aaaf0; color: #fff; }

/* 功能区 */
.ribbon {
  height: 109px;
  flex: none;
  display: flex;
  box-sizing: border-box;
  border-top: 1px solid #d8d8d8;
  border-bottom: 2px solid #8f9296;
  background: linear-gradient(#fff 45%, #e8eaeb);
}
.rgroup {
  flex: none;
  box-sizing: border-box;
  margin-top: 2px;
  margin-bottom: 2px;
  border-right: 1px solid #d0d2d4;
  display: flex;
  flex-direction: column;
}
.rgroup:last-child { border-right: 0; }
.rbody {
  height: 78px;
  flex: none;
  margin-top: 2px;
  display: flex;
}
.rpart {
  flex: none;
  box-sizing: border-box;
  padding-top: 1px;
  display: flex;
  flex-direction: column;
  gap: 2px;
}
.rlarge {
  height: 77px;
  flex: none;
  box-sizing: border-box;
  padding-top: 4px;
  display: flex;
  flex-direction: column;
  align-items: center;
  white-space: nowrap;
}
.rlarge span { margin-top: 8px; }
.rlarge.on { background: #c6d8ef; }
.rlarge .caret { margin-top: 6px; }
.ic30 { width: 30px; height: 30px; }
.ic18 { width: 17px; height: 17px; }
.ic16 { width: 16px; height: 16px; }
.ic14 { width: 14px; height: 14px; }
.ritem {
  display: flex;
  flex: none;
  align-items: center;
  gap: 3px;
  width: max-content;
  height: 24px;
  box-sizing: border-box;
  padding: 1px 3px 0;
  white-space: nowrap;
}
.ritem.on { background: #c6d8ef; padding-right: 12px; }
.dis { color: #b5b7ba; }
.caret {
  width: 0;
  height: 0;
  border-left: 3.500px solid transparent;
  border-right: 3.500px solid transparent;
  border-top: 4px solid #666;
}
.caret.side { display: inline-block; margin-left: 5px; vertical-align: 2px; }
.dis .caret { border-top-color: #bbb; }
.rlabel {
  flex: 1;
  display: flex;
  align-items: center;
  justify-content: center;
  color: #333;
  padding-top: 1px;
}

/* 下拉条 */
.combos {
  height: 30px;
  flex: none;
  display: flex;
  gap: 6px;
  padding-top: 4px;
  box-sizing: border-box;
  background: #c9ccd0;
  margin-left: -10px;
}
.combo {
  height: 22px;
  flex: none;
  display: flex;
  align-items: center;
  justify-content: space-between;
  box-sizing: border-box;
  padding: 1px 5px 0 4px;
  background: #fff;
  border: 1px solid #d8d8d8;
}

/* 主区域 */
.main {
  height: 827px;
  flex: none;
  display: flex;
  background: #e9eaec;
}
.nav {
  width: 150px;
  flex: none;
  box-sizing: border-box;
  border-right: 1px solid #b9bbbf;
  background: #fff;
  padding-top: 1px;
}
.grip {
  height: 10px;
  background: #d3d5da;
  position: relative;
  overflow: hidden;
}
.grip b {
  position: absolute;
  right: 3px;
  top: -3px;
  color: #888;
  font-size: 12px;
  line-height: 14px;
}
.title {
  height: 22px;
  line-height: 23px;
  box-sizing: border-box;
  padding-left: 8px;
  background: #f0f0f0;
  border-bottom: 1px solid #c4c6c9;
  color: #7a7a7a;
  font-weight: 700;
}
.nav-title { margin-top: 1px; padding-left: 0; text-indent: -3px; }
.nav-tools {
  height: 29px;
  display: flex;
  align-items: center;
  gap: 7px;
  box-sizing: border-box;
  background: #eee;
  border-bottom: 2px solid #c4c6c9;
}
.dash {
  width: 4px;
  height: 2px;
  margin-right: 0;
  background: #3f8ad8;
}
.nav-tree {
  display: flex;
  flex-direction: column;
  padding-top: 5px;
}
.nav-top {
  height: 26px;
  flex: none;
  display: flex;
  align-items: center;
  gap: 5px;
  margin-left: -12px;
}
.folder { width: 20px; height: 16px; }
.nav-sub {
  height: 23px;
  flex: none;
  margin: 1.500px 0 1.500px 29px;
  padding-left: 4px;
  display: flex;
  align-items: center;
  gap: 6px;
  white-space: nowrap;
}
.nav-sub.on { background: #c6d8ef; }

.mid {
  width: 282px;
  flex: none;
  margin-left: 4px;
  display: flex;
  flex-direction: column;
  background: #fff;
}
.list {
  height: 412px;
  flex: none;
  box-sizing: border-box;
  padding-top: 1px;
  border-left: 1px solid #c4c6c9;
  border-right: 1px solid #c4c6c9;
  border-bottom: 1px solid #c4c6c9;
  display: flex;
  flex-direction: column;
  background: #fff;
}
.list .title { margin-top: 1px; }
.toolrow {
  height: 29px;
  flex: none;
  display: flex;
  align-items: center;
  padding-left: 3px;
  background: #eee;
}
.toolrow + .toolrow { height: 30px; }
.titem {
  flex: none;
  box-sizing: border-box;
  display: flex;
  align-items: center;
  gap: 4px;
  white-space: nowrap;
}
.caret.side2 { margin-left: 6px; }
.search {
  height: 19px;
  flex: none;
  display: flex;
  align-items: center;
  justify-content: space-between;
  box-sizing: border-box;
  padding: 0 5px 0 3px;
  color: #999;
  background: #fff;
  border-top: 1px solid #c4c6c9;
  border-bottom: 1px solid #c4c6c9;
}
.ctree { flex: 1; }
.ctree-root {
  height: 21px;
  display: flex;
  align-items: center;
  padding-left: 10px;
}
.tri {
  width: 0;
  height: 0;
  margin-right: 7px;
  border-left: 6px solid transparent;
  border-bottom: 6px solid #444;
}
.ctree-leaf {
  width: max-content;
  height: 21px;
  line-height: 21px;
  margin-left: 40px;
  padding: 0 7px 0 3px;
  word-spacing: 1px;
  background: #c6d8ef;
}

.props {
  flex: 1;
  display: flex;
  flex-direction: column;
  margin-top: 4px;
  box-sizing: border-box;
  border-left: 1px solid #c4c6c9;
  border-right: 1px solid #c4c6c9;
  background: #eee;
  min-height: 0;
}
.props .title { margin-top: 1px; flex: none; }
.props .grip { flex: none; }
.props-wrap {
  height: 348px;
  flex: none;
  overflow: hidden;
  display: flex;
  margin-top: 2px;
  background: #fff;
}
.pscroll {
  flex: 1;
  padding: 10px 3px 0 5px;
}
.pscroll div {
  width: 7px;
  height: 80px;
  border-radius: 4px;
  background: #c9c9c9;
}
.pbtns {
  display: flex;
  gap: 6px;
  padding: 3px 0 0 0;
}
.btn {
  height: 25px;
  line-height: 24px;
  text-align: center;
  box-sizing: border-box;
  background: #f7f7f7;
  border: 1px solid #d4d8e0;
  border-radius: 3px;
}
.pbtn { width: 79px; }

/* 表格 */
.grid {
  border-collapse: collapse;
  table-layout: fixed;
  flex: none;
  align-self: flex-start;
}
.grid td, .grid th {
  height: 21px;
  box-sizing: border-box;
  padding: 0 3px;
  border: 1px solid #d2d3d5;
  font-weight: 400;
  white-space: nowrap;
  overflow: hidden;
  background-clip: padding-box;
}
.grid .head th {
  height: 17px;
  line-height: 15px;
  text-align: center;
  background: #f0f0f0;
}
.grid .head th.hot { background: #7ab8f7; color: #fff; }
.gut {
  background: #eee;
  text-align: center;
  padding: 0 !important;
}
.hotgut { background: #6fb1f5; color: #fff; font-weight: 700; }
.grid .hotgut { font-weight: 700; }
.hotgut2 { background: #b5d6f7; font-weight: 700; }
.grid .hotgut2 { font-weight: 700; }
.grid td.sel {
  box-shadow: inset 0 0 0 2px #707070;
  background: #fff;
}
.grid .blue { color: #3a6ee8; }
.chk { padding: 0 !important; }
.box {
  display: block;
  width: 14px;
  height: 14px;
  margin-left: 12px;
  box-sizing: border-box;
  border: 1px solid #8f8f8f;
  border-radius: 3px;
  background: #fff;
}
.box.ck { background: #5ea8f0; border-color: #5ea8f0; }
.box svg { margin: -1px; width: 14px; height: 14px; }

.c { text-align: center; }

/* 画布 */
.sash {
  flex: none;
  position: relative;
  background: #dcdde0;
}
.left-sash { width: 5px; }
.left-sash i {
  position: absolute;
  left: 1px;
  top: 364px;
  width: 4px;
  height: 54px;
  background: #5a5d62;
}
.right-sash { width: 5px; }
.right-sash i {
  position: absolute;
  left: 0;
  top: 406px;
  width: 5px;
  height: 70px;
  background: #5a5d62;
}
.canvas {
  width: 1102px;
  flex: none;
  position: relative;
  background: #000;
  overflow: hidden;
}
.canvas::after {
  content: "";
  position: absolute;
  inset: 0;
  border: 2px solid #3e3f42;
  pointer-events: none;
}
.cadt { font-family: "Liberation Sans", "Noto Sans CJK SC", sans-serif; }
.dark { fill: #00cc00; stroke: #00cc00; stroke-width: .3px; }
.bright { fill: #00f000; stroke: #00f000; stroke-width: .3px; }
.heavy { fill: #00f000; stroke: #00f000; stroke-width: .6px; }
.viewbar {
  position: absolute;
  left: 1068px;
  top: 5px;
  width: 32px;
  height: 224px;
  box-sizing: border-box;
  padding-top: 11px;
  display: flex;
  flex-direction: column;
  align-items: center;
  border-radius: 3px;
  background: #58595b;
}
.vb2 { margin-top: 6px; }
.vcaret {
  width: 0;
  height: 0;
  margin-top: 5px;
  border-left: 4px solid transparent;
  border-right: 4px solid transparent;
  border-top: 4px solid #2c2e33;
}
.vline {
  width: 24px;
  height: 1px;
  margin-top: 5px;
  margin-bottom: -3px;
  background: #35373c;
}

/* 右侧 */
.right {
  flex: 1;
  position: relative;
  display: flex;
  flex-direction: column;
  border-left: 1px solid #c4c6c9;
  background: #fff;
  padding-top: 1px;
}
.right .title { margin-top: 1px; }
.rt-top {
  height: 409px;
  flex: none;
  box-sizing: border-box;
  border-bottom: 1px solid #c4c6c9;
}
.rt-gap { height: 6px; flex: none; background: #eeeff1; }
.rt-bottom { flex: 1; }
.dwg-wrap {
  height: 375px;
  margin-top: 1px;
  padding-left: 1px;
  background:
    linear-gradient(#f0f0f0, #f0f0f0) top / 100% 18px no-repeat,
    linear-gradient(#eee, #eee) left / 22px 100% no-repeat,
    #fff;
}
.dwg td { padding-top: 1px; }
.dwg .tree-cell { position: relative; overflow: visible; padding: 0; }
.dwg td { background-clip: border-box; }
.grid tr.green td:not(.gut) { background: #008000; }
.minus {
  position: absolute;
  top: 4px;
  width: 12px;
  height: 12px;
  line-height: 11px;
  text-align: center;
  border: 1px solid #8a8a8a;
  border-radius: 2px;
  background: #fff;
}
.minus.gray { left: 2px; background: #e2e2e2; }
.minus.m2 { left: 12px; }
.n1 { position: absolute; left: 21px; top: 3px; }
.n2 { position: absolute; left: 31px; top: 3px; }
.n3 { position: absolute; left: 41px; top: 3px; }
.tl { position: absolute; border-left: 1px solid #d5d5d5; border-bottom: 1px solid #d5d5d5; }
.l1 { left: 8px; top: -6px; width: 5px; height: 15px; }
.l2 { left: 18px; top: -6px; width: 16px; height: 15px; border-color: #fff; }
.layer-tools {
  height: 35px;
  display: flex;
  align-items: center;
  gap: 14px;
  padding-left: 4px;
  box-sizing: border-box;
  background: #eee;
  border-bottom: 1px solid #c4c6c9;
}
.layer-wrap {
  background: linear-gradient(#eee, #eee) top / 100% 18px no-repeat;
}
.layer td { height: 26px; }
.layer .head th { height: 18px; }
.lbox {
  display: block;
  width: 14px;
  height: 14px;
  margin: 5px auto 0;
  box-sizing: border-box;
  padding: 1px;
  border: 1px solid #8a8a8a;
  border-radius: 2px;
}
.lbox i {
  width: 10px;
  height: 10px;
  border: 1px solid #5ea8f0;
  border-radius: 3px;
  box-sizing: border-box;
}
.ltri { width: 10px; height: 12px; margin: -4px auto 0; }
.edge-tab {
  position: absolute;
  right: 0;
  top: 474px;
  width: 5px;
  height: 59px;
  border-radius: 3px 0 0 3px;
  background: #5a5d62;
}

/* 状态栏 */
.status {
  height: 29px;
  flex: none;
  position: relative;
  display: flex;
  align-items: center;
  background: #dedfe1;
  border-top: 1px solid #c4c6c9;
  box-sizing: border-box;
  font-size: 13px;
  color: #444;
}
.s-xy { margin-left: 3px; width: 254px; letter-spacing: .2px; }
.s-h { width: 79px; font-size: 12px; }
.s-b { font-size: 12px; }
.s-fps { position: absolute; left: 1828px; }
.taskline { height: 3px; flex: none; background: #3a3430; }

/* 弹窗 */
.modal {
  position: absolute;
  left: 405px;
  top: 639px;
  width: 1101px;
  height: 361px;
  display: flex;
  flex-direction: column;
  background: #eee;
}
.m-title {
  height: 27px;
  flex: none;
  display: flex;
  align-items: center;
  justify-content: space-between;
  padding: 0 7px 0 7px;
  background: #2f80e2;
  color: #e8f1fc;
}
.m-ctrls { display: flex; gap: 14px; }
.m-body {
  flex: 1;
  display: flex;
  padding-left: 11px;
  min-height: 0;
}
.m-left {
  width: 224px;
  flex: none;
  display: flex;
  flex-direction: column;
  padding-top: 11px;
  box-sizing: border-box;
}
.m-get { width: 79px; margin-bottom: 6px; flex: none; }
.m-bar {
  height: 25px;
  flex: none;
  position: relative;
  display: flex;
  align-items: center;
  padding: 2px 0 0 6px;
  margin-bottom: 2px;
  background: #fff;
  border: 1px solid #d4d6d8;
  border-bottom-width: 2px;
  box-sizing: border-box;
}
.m-more { position: absolute; right: 4px; top: 3px; font-size: 9px; color: #555; letter-spacing: 0; }
.m-search {
  flex: none;
  height: 20px;
  padding-top: 2px;
  margin-top: -1px;
  border-top: 0;
  border-left: 1px solid #d4d6d8;
  border-right: 1px solid #d4d6d8;
}
.m-tree {
  flex: 1;
  overflow: hidden;
  background: #fff;
  border-left: 1px solid #d4d6d8;
  border-right: 1px solid #d4d6d8;
}
.m-root {
  height: 21px;
  display: flex;
  align-items: center;
  padding-left: 11px;
}
.m-leaf {
  height: 21px;
  line-height: 21px;
  margin-left: 40px;
  padding-left: 3px;
  overflow: hidden;
  white-space: nowrap;
  word-spacing: 1px;
  background: #c6d8ef;
}
.m-right {
  width: 848px;
  margin-left: 5px;
  padding-top: 11px;
  flex: none;
  display: flex;
  flex-direction: column;
}
.m-btnrow { display: flex; gap: 6px; flex: none; }
.mb1 { width: 100px; }
.mb2 { width: 82px; margin-left: auto; }
.m-rbar {
  height: 26px;
  flex: none;
  margin-top: 7px;
  display: flex;
  align-items: center;
  padding: 2px 0 0 7px;
  box-sizing: border-box;
  background: #fff;
  border: 1px solid #d4d6d8;
}
.sepd { padding-left: 9px; position: relative; }
.sepd::before {
  content: "";
  position: absolute;
  left: 0;
  top: -1px;
  height: 20px;
  border-left: 1px solid #d4d6d8;
}
.m-grid {
  flex: 1;
  margin-top: 7px;
  background: #fff;
  border-right: 1px solid #c6cace;
}
.circuit td { border-color: #c6cace; }
.cg { background: #eee; }
</style>
